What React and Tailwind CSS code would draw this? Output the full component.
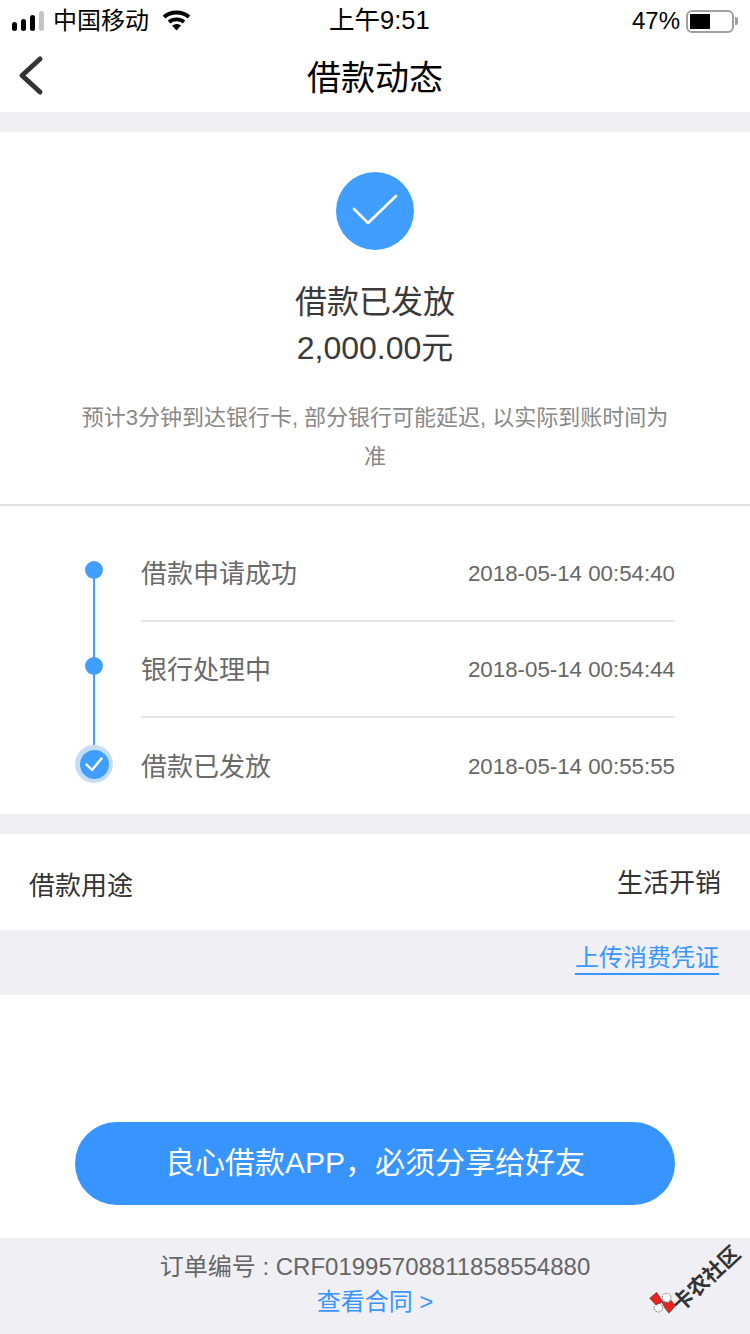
const font = { fontFamily: '"Liberation Sans","Noto Sans CJK SC",sans-serif' };

function Logo() {
  return (
    <svg width="35" height="35" viewBox="0 0 105 105" className="absolute left-[645px] top-[1285px]">
      <circle cx="65" cy="38" r="13" fill="#fff" stroke="#333" strokeWidth="2" strokeDasharray="5 3" />
      <circle cx="40" cy="68" r="13" fill="#fff" stroke="#333" strokeWidth="2" strokeDasharray="5 3" />
      <path d="M14 40 L35 22 L54 50 L33 60 Z" fill="#e8231f" stroke="#333" strokeWidth="1.5" />
      <path d="M50 50 L70 54 L78 46 L92 62 L72 85 L60 70 Z" fill="#e8231f" stroke="#333" strokeWidth="1.5" />
    </svg>
  );
}

function Row({ label, time, last }) {
  return (
    <div className="flex h-[96px]">
      <div className="relative w-[141px] shrink-0">
        {!last && <div className="absolute left-[93px] top-[44px] h-[96px] w-[2px] bg-[#409eff]" />}
        {!last && <div className="absolute left-[85px] top-[35px] size-[18px] rounded-full bg-[#409eff]" />}
        {last && (
          <div className="absolute left-[75px] top-[27px] flex size-[38px] items-center justify-center rounded-full bg-[#c5dcf7]">
            <div className="flex size-[29px] items-center justify-center rounded-full bg-[#409eff]">
              <svg width="22" height="22" viewBox="0 0 22 22" fill="none">
                <path d="M3.5 11.5 L9 17 L18.5 5.5" stroke="#fff" strokeWidth="2.4" strokeLinecap="round" strokeLinejoin="round" />
              </svg>
            </div>
          </div>
        )}
      </div>
      <div className={`mr-[75px] flex flex-1 items-center justify-between ${last ? "" : "border-b-2 border-[#e3e3e3]"}`}>
        <span className="pt-[2px] text-[26px] text-[#6a6a6a]">{label}</span>
        <span className="pt-[1px] text-[22.3px] text-[#666]">{time}</span>
      </div>
    </div>
  );
}

export default function App() {
  return (
    <div className="relative h-[1334px] w-[750px] overflow-hidden bg-white" style={font}>
      <div className="flex h-[40px] items-center justify-between pl-[12px] pr-[12px] pt-[2px] text-black">
        <div className="flex items-center">
          <div className="flex items-end gap-[4px]">
            <div className="h-[9px] w-[5px] rounded-[2.5px] bg-black" />
            <div className="h-[12px] w-[5px] rounded-[2.5px] bg-black" />
            <div className="h-[16px] w-[5px] rounded-[2.5px] bg-black" />
            <div className="h-[20px] w-[5px] rounded-[2.5px] bg-[#c4c4c4]" />
          </div>
          <span className="ml-[9px] text-[24px] leading-none">中国移动</span>
          <svg width="30" height="22" viewBox="0 0 30 22" className="ml-[13px]" fill="none" stroke="#000" strokeWidth="3.8">
            <path d="M2 7 C9 1 20 1 27 7" />
            <path d="M7 12 C11 8.5 18 8.5 22 12" />
            <path d="M14.5 20.5 L10 15.5 C13 13.5 16.5 13.5 19 15.5 Z" fill="#000" stroke="none" />
          </svg>
        </div>
        <span className="absolute left-[329px] text-[25.5px] leading-none">上午9:51</span>
        <div className="flex items-center">
          <span className="text-[24px] leading-none">47%</span>
          <div className="ml-[6px] flex h-[23px] w-[48px] items-center rounded-[6px] border-2 border-[#a0a0a0] p-[2px]">
            <div className="h-[15px] w-[20px] bg-black" />
          </div>
          <div className="ml-[1px] h-[8px] w-[3px] rounded-r-[2px] bg-[#a0a0a0]" />
        </div>
      </div>

      <div className="relative flex h-[72px] items-center justify-center">
        <svg width="30" height="44" viewBox="0 0 30 44" fill="none" className="absolute left-[16px] top-[15px]">
          <path d="M24 4 L6 20.5 L24 37" stroke="#333" strokeWidth="5" strokeLinecap="round" strokeLinejoin="round" />
        </svg>
        <span className="pt-[3px] text-[34px] leading-none text-black">借款动态</span>
      </div>

      <div className="h-[20px] bg-[#efeff4]" />

      <div className="flex h-[374px] flex-col items-center border-b-2 border-[#e0e0e0] pt-[40px]">
        <div className="flex size-[78px] items-center justify-center rounded-full bg-[#409eff]">
          <svg width="48" height="40" viewBox="0 0 48 40" fill="none">
            <path d="M3 18 L17 32 L45 5" stroke="#fff" strokeWidth="2.6" strokeLinecap="round" strokeLinejoin="round" />
          </svg>
        </div>
        <div className="mt-[29px] text-[32px] leading-[46px] text-[#3a3a3a]">借款已发放</div>
        <div className="text-[32px] leading-[46px] text-[#3a3a3a]">2,000.00元</div>
        <div className="mt-[27px] w-[600px] text-center text-[22px] leading-[39px] text-[#888]">
          预计3分钟到达银行卡, 部分银行可能延迟, 以实际到账时间为准
        </div>
      </div>

      <div className="pt-[20px]">
        <Row label="借款申请成功" time="2018-05-14 00:54:40" />
        <Row label="银行处理中" time="2018-05-14 00:54:44" />
        <Row label="借款已发放" time="2018-05-14 00:55:55" last />
      </div>

      <div className="h-[20px] bg-[#efeff4]" />

      <div className="flex h-[96px] items-center justify-between px-[29px] text-[26px] text-[#333]">
        <span className="pt-[8px]">借款用途</span>
        <span className="pt-[2px]">生活开销</span>
      </div>

      <div className="flex h-[65px] items-start justify-end bg-[#efeff4] pr-[31px] pt-[9px]">
        <span className="h-[36px] border-b-2 border-[#3a96ff] pt-[2px] text-[24px] leading-[34px] text-[#3a96ff]">上传消费凭证</span>
      </div>

      <div className="flex h-[243px] justify-center pt-[127px]">
        <div className="flex h-[83px] w-[600px] items-center justify-center rounded-full bg-[#3894ff] pb-[2px] text-[30px] text-white">
          良心借款APP，必须分享给好友
        </div>
      </div>

      <div className="flex h-[96px] flex-col items-center bg-[#efeff4] pt-[11px]">
        <div className="text-[24px] leading-[35px] text-[#666]">订单编号 : CRF01995708811858554880</div>
        <div className="text-[24px] leading-[36px] text-[#3a96ff]">查看合同 &gt;</div>
      </div>

      <Logo />
      <div className="absolute left-[664px] top-[1268px] rotate-[-43deg] whitespace-nowrap text-[21px] font-bold leading-none text-[#333]">卡农社区</div>
    </div>
  );
}
